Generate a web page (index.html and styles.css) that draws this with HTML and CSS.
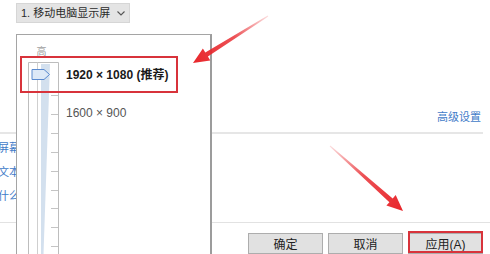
FILE: index.html
```html
<!DOCTYPE html>
<html lang="zh-CN">
<head>
<meta charset="utf-8">
<title>显示设置</title>
<link rel="stylesheet" href="styles.css">
</head>
<body>
<div class="page">
  <div class="topbar">
    <div class="select">
      <span>1. 移动电脑显示屏</span>
      <svg class="chev" width="8" height="5" viewBox="0 0 8 5"><path d="M0.5 0.5 L4 4 L7.5 0.5" fill="none" stroke="#555" stroke-width="1.1"/></svg>
    </div>
  </div>
  <div class="adv-row"><span class="link">高级设置</span></div>
  <div class="sep sep-a"></div>
  <div class="related">
    <span class="link">校准屏幕</span>
    <span class="link">ClearType 文本</span>
    <span class="link">调整什么</span>
  </div>
  <div class="sep sep-b"></div>
  <div class="buttons">
    <button class="btn">确定</button>
    <button class="btn">取消</button>
    <button class="btn">应用(A)</button>
  </div>

  <div class="popup">
    <svg class="slider" width="48" height="219" viewBox="17 35 48 219">
      <text x="36.5" y="55" font-size="10" fill="#a0a0a0" font-family="Noto Sans CJK SC, sans-serif">高</text>
      <path d="M28.5 254 V62.5 H58.5 V254" fill="none" stroke="#bdbdbd" stroke-width="1"/>
      <path d="M37.5 62.5 V254" fill="none" stroke="#cfcfcf" stroke-width="1"/>
      <polygon points="41,64 50,64 43.5,254 41,254" fill="#d3e0ee"/>
      <path d="M51 95.5 H58 M51 114.5 H58 M51 133.5 H58 M51 152.5 H58 M51 171.5 H58 M51 190.5 H58 M51 208.5 H58 M51 227.5 H58 M51 246.5 H58" stroke="#c4c4c4" stroke-width="1"/>
      <path d="M32 69.5 H44 L49.5 74.5 L44 79.5 H32 Z" fill="#dde9f7" stroke="#5b8bd0" stroke-width="1"/>
    </svg>
    <div class="modes">
      <div class="mode mode-rec">1920 × 1080 (推荐)</div>
      <div class="mode mode-alt">1600 × 900</div>
    </div>
  </div>

  <svg class="annot" width="490" height="254" viewBox="0 0 490 254">
    <defs>
      <linearGradient id="g1" gradientUnits="userSpaceOnUse" x1="268" y1="16" x2="193" y2="63">
        <stop offset="0" stop-color="#e8262b" stop-opacity="0.15"/>
        <stop offset="0.45" stop-color="#e8262b" stop-opacity="0.8"/>
        <stop offset="1" stop-color="#e8262b"/>
      </linearGradient>
      <linearGradient id="g2" gradientUnits="userSpaceOnUse" x1="330" y1="146" x2="403" y2="211">
        <stop offset="0" stop-color="#e8262b" stop-opacity="0.15"/>
        <stop offset="0.45" stop-color="#e8262b" stop-opacity="0.8"/>
        <stop offset="1" stop-color="#e8262b"/>
      </linearGradient>
    </defs>
    <polygon points="268.3,16.4 207.9,56.6 210.3,60.4 193,63 202.9,48.6 205.3,52.4 267.7,15.6" fill="url(#g1)"/>
    <polygon points="329.7,146.4 389.4,202.2 386.4,205.6 403,211 395.7,195.1 392.7,198.5 330.3,145.6" fill="url(#g2)"/>
    <rect x="21" y="57" width="156" height="35" fill="none" stroke="#d8333b" stroke-width="2"/>
    <rect x="409" y="232" width="73" height="20" fill="none" stroke="#d8333b" stroke-width="2"/>
  </svg>
</div>
</body>
</html>
```
FILE: styles.css
```css
html, body {
  margin: 0;
  padding: 0;
  background: #fff;
}
.page {
  position: relative;
  width: 490px;
  height: 254px;
  overflow: hidden;
  display: flex;
  flex-direction: column;
  font-family: "Liberation Sans", "Noto Sans CJK SC", sans-serif;
  color: #222;
}
.topbar {
  padding: 3px 0 0 16px;
  display: flex;
}
.select {
  width: 105px;
  height: 18px;
  background: #e4e4e4;
  border: 1px solid #d6d6d6;
  display: flex;
  align-items: center;
  justify-content: space-between;
  padding: 0 3px 0 4px;
  box-sizing: content-box;
  font-size: 11px;
  color: #2a2a2a;
}
.select span { line-height: 18px; }
.chev { margin-right: 1px; }
.link {
  color: #3f7bc8;
  font-size: 11px;
  white-space: nowrap;
}
.adv-row {
  margin-top: 87px;
  height: 14px;
  line-height: 14px;
  display: flex;
  justify-content: flex-end;
  padding-right: 9px;
}
.sep {
  background: #e6e6e6;
}
.sep-a {
  margin-top: 8px;
  height: 2px;
  margin-right: 7px;
}
.related {
  width: 20px;
  padding-top: 2px;
  overflow: hidden;
  display: flex;
  flex-direction: column;
  align-items: flex-end;
}
.related .link {
  line-height: 24px;
  height: 24px;
}
.sep-b {
  margin-top: 14px;
  height: 1px;
  background: #e2e2e2;
}
.buttons {
  margin-top: 10px;
  display: flex;
  justify-content: flex-end;
  gap: 5px;
  padding-right: 7px;
}
.btn {
  width: 75px;
  height: 21px;
  margin: 0;
  padding: 0;
  background: #e1e1e1;
  border: 1px solid #adadad;
  font-family: "Liberation Sans", "Noto Sans CJK SC", sans-serif;
  font-size: 12px;
  color: #222;
}
.popup {
  position: absolute;
  left: 16px;
  top: 34px;
  width: 193px;
  height: 240px;
  background: #fff;
  border: 1px solid #a5a5a5;
  border-right: 2px solid #9c9c9c;
  display: flex;
}
.slider {
  display: block;
  flex: none;
}
.modes {
  padding-top: 32px;
  padding-left: 1px;
  display: flex;
  flex-direction: column;
}
.mode {
  font-size: 12px;
  line-height: 16px;
  height: 16px;
  white-space: nowrap;
}
.mode-rec {
  font-weight: bold;
  color: #1a1a1a;
}
.mode-alt {
  margin-top: 22px;
  color: #555;
}
.annot {
  position: absolute;
  left: 0;
  top: 0;
  pointer-events: none;
}
```
